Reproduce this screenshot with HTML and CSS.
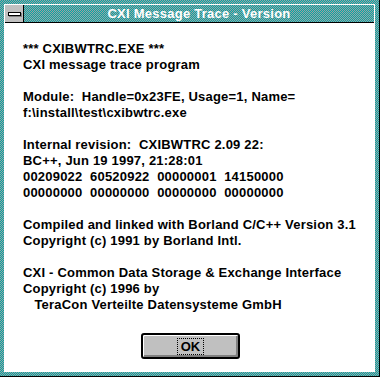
FILE: index.html
```html
<!DOCTYPE html>
<html lang="en">
<head>
    <meta charset="UTF-8">
    <title>CXI Message Trace - Version</title>
    <link rel="stylesheet" href="styles.css">
</head>
<body>
    <div class="window">
        <div class="frame">
            <div class="titlebar">
                <div class="sysmenu"><span class="sysbar"></span></div>
                <div class="caption">CXI Message Trace - Version</div>
            </div>
            <div class="client">
                <pre class="info">*** CXIBWTRC.EXE ***
CXI message trace program

Module:  Handle=0x23FE, Usage=1, Name=
f:\install\test\cxibwtrc.exe

Internal revision:  CXIBWTRC 2.09 22:
BC++, Jun 19 1997, 21:28:01
00209022  60520922  00000001  14150000
00000000  00000000  00000000  00000000

Compiled and linked with Borland C/C++ Version 3.1
Copyright (c) 1991 by Borland Intl.

CXI - Common Data Storage &amp; Exchange Interface
Copyright (c) 1996 by
   TeraCon Verteilte Datensysteme GmbH</pre>
                <button class="ok-btn"><span class="focus">OK</span></button>
            </div>
        </div>
    </div>
</body>
</html>
```

FILE: styles.css
```css
body {
    margin: 0;
    font-family: "Liberation Sans", Arial, sans-serif;
}
.window {
    width: 380px;
    height: 377px;
    box-sizing: border-box;
    padding: 4px;
    border-right: 1px solid #000;
    border-bottom: 1px solid #000;
    background: repeating-conic-gradient(#00a8a8 0 25%, #a0a0a0 0 50%) 0 0 / 2px 2px;
}
.frame {
    height: 100%;
    box-sizing: border-box;
    border: 1px solid #fff;
    background: #fff;
    display: flex;
    flex-direction: column;
}
.titlebar {
    display: flex;
    height: 18px;
    box-sizing: border-box;
    border-bottom: 1px solid #000;
    background: repeating-conic-gradient(#00a8a8 0 25%, #a0a0a0 0 50%) 0 0 / 2px 2px;
}
.sysmenu {
    width: 19px;
    box-sizing: border-box;
    border-right: 1px solid #000;
    background: #c0c0c0;
    display: flex;
    align-items: center;
    justify-content: center;
}
.sysbar {
    width: 13px;
    height: 4px;
    box-sizing: border-box;
    border: 1px solid #000;
    background: #fff;
    box-shadow: 1px 1px 0 #808080;
}
.caption {
    flex: 1;
    text-align: center;
    color: #fff;
    font-weight: bold;
    font-size: 13px;
    letter-spacing: 0.25px;
    line-height: 17px;
}
.client {
    flex: 1;
    padding: 18px 0 0 18px;
}
.info {
    margin: 0;
    font-family: "Liberation Sans", Arial, sans-serif;
    font-weight: bold;
    font-size: 13px;
    letter-spacing: 0.2px;
    line-height: 16px;
    color: #000;
    white-space: pre;
}
.ok-btn {
    display: flex;
    align-items: center;
    justify-content: center;
    margin: 20px 0 0 118px;
    width: 99px;
    height: 26px;
    box-sizing: border-box;
    padding: 0;
    border: 2px solid #000;
    border-radius: 3px;
    background: #c0c0c0;
    box-shadow: inset 1px 1px 0 #fff, inset -2px -2px 0 #808080;
    font-family: "Liberation Sans", Arial, sans-serif;
    font-weight: bold;
    font-size: 13px;
    color: #000;
}
.focus {
    padding: 1px 3px;
    line-height: 13px;
    border: 1px dotted #000;
}
```
